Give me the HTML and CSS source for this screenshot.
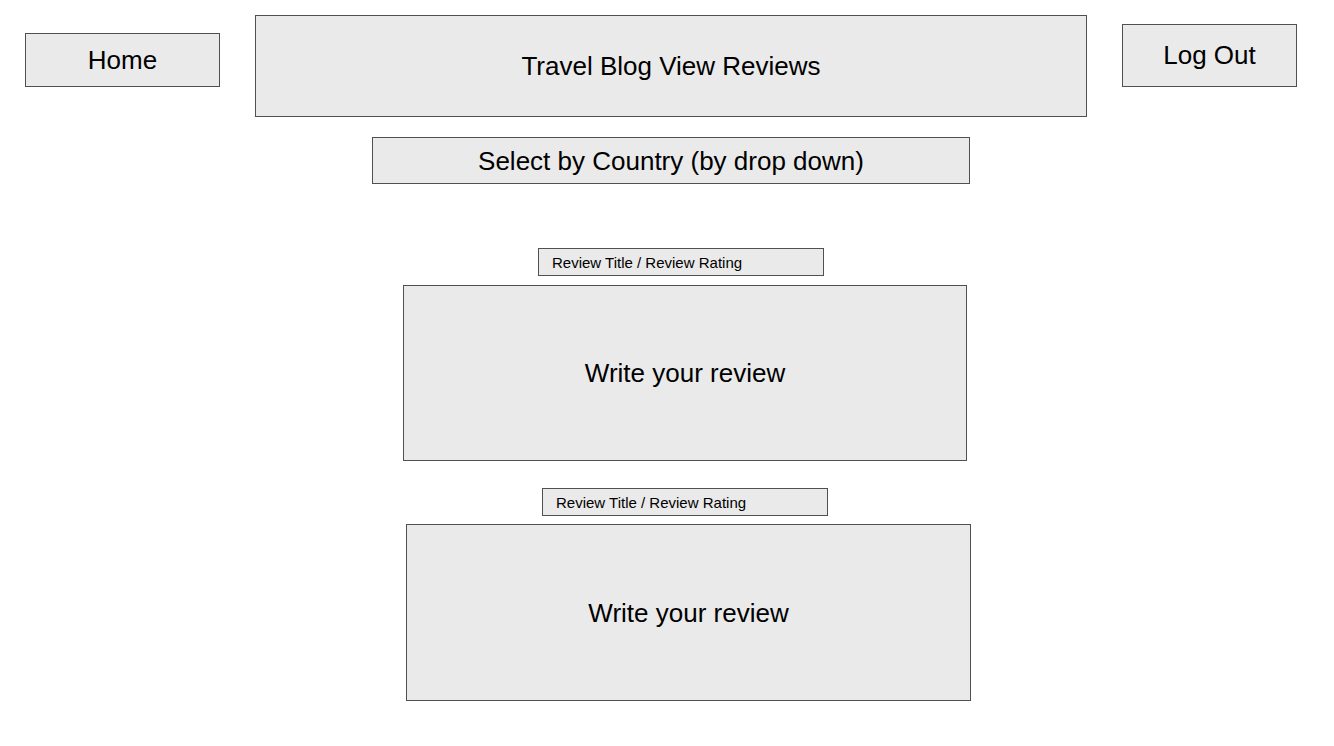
FILE: index.html
```html
<!DOCTYPE html>
<html lang="en">
<head>
<meta charset="utf-8">
<title>Travel Blog View Reviews</title>
<link rel="stylesheet" href="styles.css">
</head>
<body>
<div class="page">
  <header class="top">
    <div class="box home">Home</div>
    <div class="box title">Travel Blog View Reviews</div>
    <div class="box logout">Log Out</div>
  </header>
  <div class="box select">Select by Country (by drop down)</div>
  <section class="reviews">
    <div class="box rtitle rtitle-1">Review Title / Review Rating</div>
    <div class="box review review-1">Write your review</div>
    <div class="box rtitle rtitle-2">Review Title / Review Rating</div>
    <div class="box review review-2">Write your review</div>
  </section>
</div>
</body>
</html>
```

FILE: styles.css
```css
* { box-sizing: border-box; }
html, body { margin: 0; padding: 0; background: #ffffff; }
body {
  font-family: "Liberation Sans", Arial, sans-serif;
  color: #000;
  width: 1334px;
  height: 746px;
  overflow: hidden;
}
.page {
  display: flex;
  flex-direction: column;
  align-items: flex-start;
}
.box {
  background: #eaeaea;
  border: 1px solid #505050;
  display: flex;
  align-items: center;
  justify-content: center;
  font-size: 26px;
  line-height: 1;
}
.top {
  display: flex;
  align-items: flex-start;
  padding-left: 25px;
  gap: 35px;
}
.home { width: 195px; height: 54px; margin-top: 33px; }
.title { width: 832px; height: 102px; margin-top: 15px; }
.logout { width: 175px; height: 63px; margin-top: 24px; padding-bottom: 2px; }
.select { width: 598px; height: 47px; margin-top: 20px; margin-left: 372px; }
.reviews {
  display: flex;
  flex-direction: column;
  align-items: flex-start;
}
.rtitle {
  width: 286px;
  height: 28px;
  font-size: 15px;
  justify-content: flex-start;
  padding-left: 13px;
}
.rtitle-1 { margin-top: 64px; margin-left: 538px; }
.review-1 { margin-top: 9px; margin-left: 403px; width: 564px; height: 176px; }
.rtitle-2 { margin-top: 27px; margin-left: 542px; }
.review-2 { margin-top: 8px; margin-left: 406px; width: 565px; height: 177px; }
```
